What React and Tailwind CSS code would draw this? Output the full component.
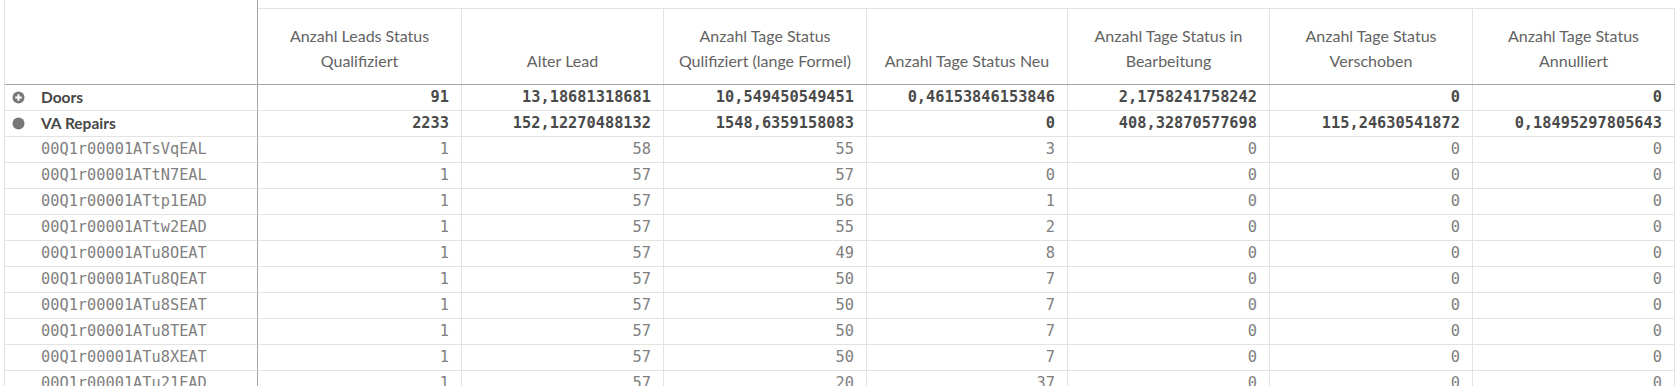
import React from 'react';

const columns = [
  ['Anzahl Leads Status', 'Qualifiziert'],
  ['Alter Lead'],
  ['Anzahl Tage Status', 'Qulifiziert (lange Formel)'],
  ['Anzahl Tage Status Neu'],
  ['Anzahl Tage Status in', 'Bearbeitung'],
  ['Anzahl Tage Status', 'Verschoben'],
  ['Anzahl Tage Status', 'Annulliert'],
];

const groups = [
  {
    label: 'Doors',
    icon: 'plus',
    values: ['91', '13,18681318681', '10,549450549451', '0,46153846153846', '2,1758241758242', '0', '0'],
  },
  {
    label: 'VA Repairs',
    icon: 'dot',
    values: ['2233', '152,12270488132', '1548,6359158083', '0', '408,32870577698', '115,24630541872', '0,18495297805643'],
  },
];

const leads = [
  ['00Q1r00001ATsVqEAL', '1', '58', '55', '3', '0', '0', '0'],
  ['00Q1r00001ATtN7EAL', '1', '57', '57', '0', '0', '0', '0'],
  ['00Q1r00001ATtp1EAD', '1', '57', '56', '1', '0', '0', '0'],
  ['00Q1r00001ATtw2EAD', '1', '57', '55', '2', '0', '0', '0'],
  ['00Q1r00001ATu8OEAT', '1', '57', '49', '8', '0', '0', '0'],
  ['00Q1r00001ATu8QEAT', '1', '57', '50', '7', '0', '0', '0'],
  ['00Q1r00001ATu8SEAT', '1', '57', '50', '7', '0', '0', '0'],
  ['00Q1r00001ATu8TEAT', '1', '57', '50', '7', '0', '0', '0'],
  ['00Q1r00001ATu8XEAT', '1', '57', '50', '7', '0', '0', '0'],
  ['00Q1r00001ATu21EAD', '1', '57', '20', '37', '0', '0', '0'],
];

const sans = "font-['Lato','Open_Sans',sans-serif]";
const mono = "font-['DejaVu_Sans_Mono','Liberation_Mono',monospace]";

const PlusIcon = () => (
  <svg width="13" height="13" viewBox="0 0 13 13">
    <circle cx="6.5" cy="6.5" r="6" fill="#777" />
    <path d="M6.5 3.2v6.6M3.2 6.5h6.6" stroke="#fff" strokeWidth="2" />
  </svg>
);

const DotIcon = () => (
  <svg width="13" height="13" viewBox="0 0 13 13">
    <circle cx="6.5" cy="6.5" r="6" fill="#777" />
  </svg>
);

const App = () => {
  return (
    <div className="h-[386px] overflow-hidden bg-white">
      <div className="ml-1 border-l border-[#e3e3e3] grid grid-cols-[253px_204px_202px_203px_201px_202px_203px_202px]">
        {/* header */}
        <div className="h-[85px] border-r border-r-[#a3a3a3] border-b border-b-[#a6a6a6]" />
        {columns.map((lines, i) => (
          <div key={i} className="pt-2 border-b border-[#a6a6a6]">
            <div
              className={`h-[76px] border-t border-r border-[#e3e3e3] flex flex-col justify-end items-center pb-[11px] text-[16px] leading-[25px] text-[#636363] ${sans}`}
            >
              {lines.map((l) => (
                <span key={l}>{l}</span>
              ))}
            </div>
          </div>
        ))}

        {/* group rows */}
        {groups.map((g) => (
          <React.Fragment key={g.label}>
            <div className="h-[26px] flex items-center pl-[7px] border-r border-r-[#a3a3a3] border-b border-b-[#e3e3e3]">
              {g.icon === 'plus' ? <PlusIcon /> : <DotIcon />}
              <span className={`ml-4 text-[15.5px] font-bold text-[#474747] ${sans}`}>{g.label}</span>
            </div>
            {g.values.map((v, i) => (
              <div
                key={i}
                className={`h-[26px] flex items-center justify-end pr-3 border-r border-b border-[#e3e3e3] text-[15.3px] font-bold text-[#4a4a4a] ${mono}`}
              >
                {v}
              </div>
            ))}
          </React.Fragment>
        ))}

        {/* lead rows */}
        {leads.map(([id, ...vals]) => (
          <React.Fragment key={id}>
            <div
              className={`h-[26px] flex items-center pl-9 border-r border-r-[#a3a3a3] border-b border-b-[#e3e3e3] text-[15.3px] text-[#808080] ${mono}`}
            >
              {id}
            </div>
            {vals.map((v, i) => (
              <div
                key={i}
                className={`h-[26px] flex items-center justify-end pr-3 border-r border-b border-[#e3e3e3] text-[15.3px] text-[#808080] ${mono}`}
              >
                {v}
              </div>
            ))}
          </React.Fragment>
        ))}
      </div>
    </div>
  );
};

export default App;
